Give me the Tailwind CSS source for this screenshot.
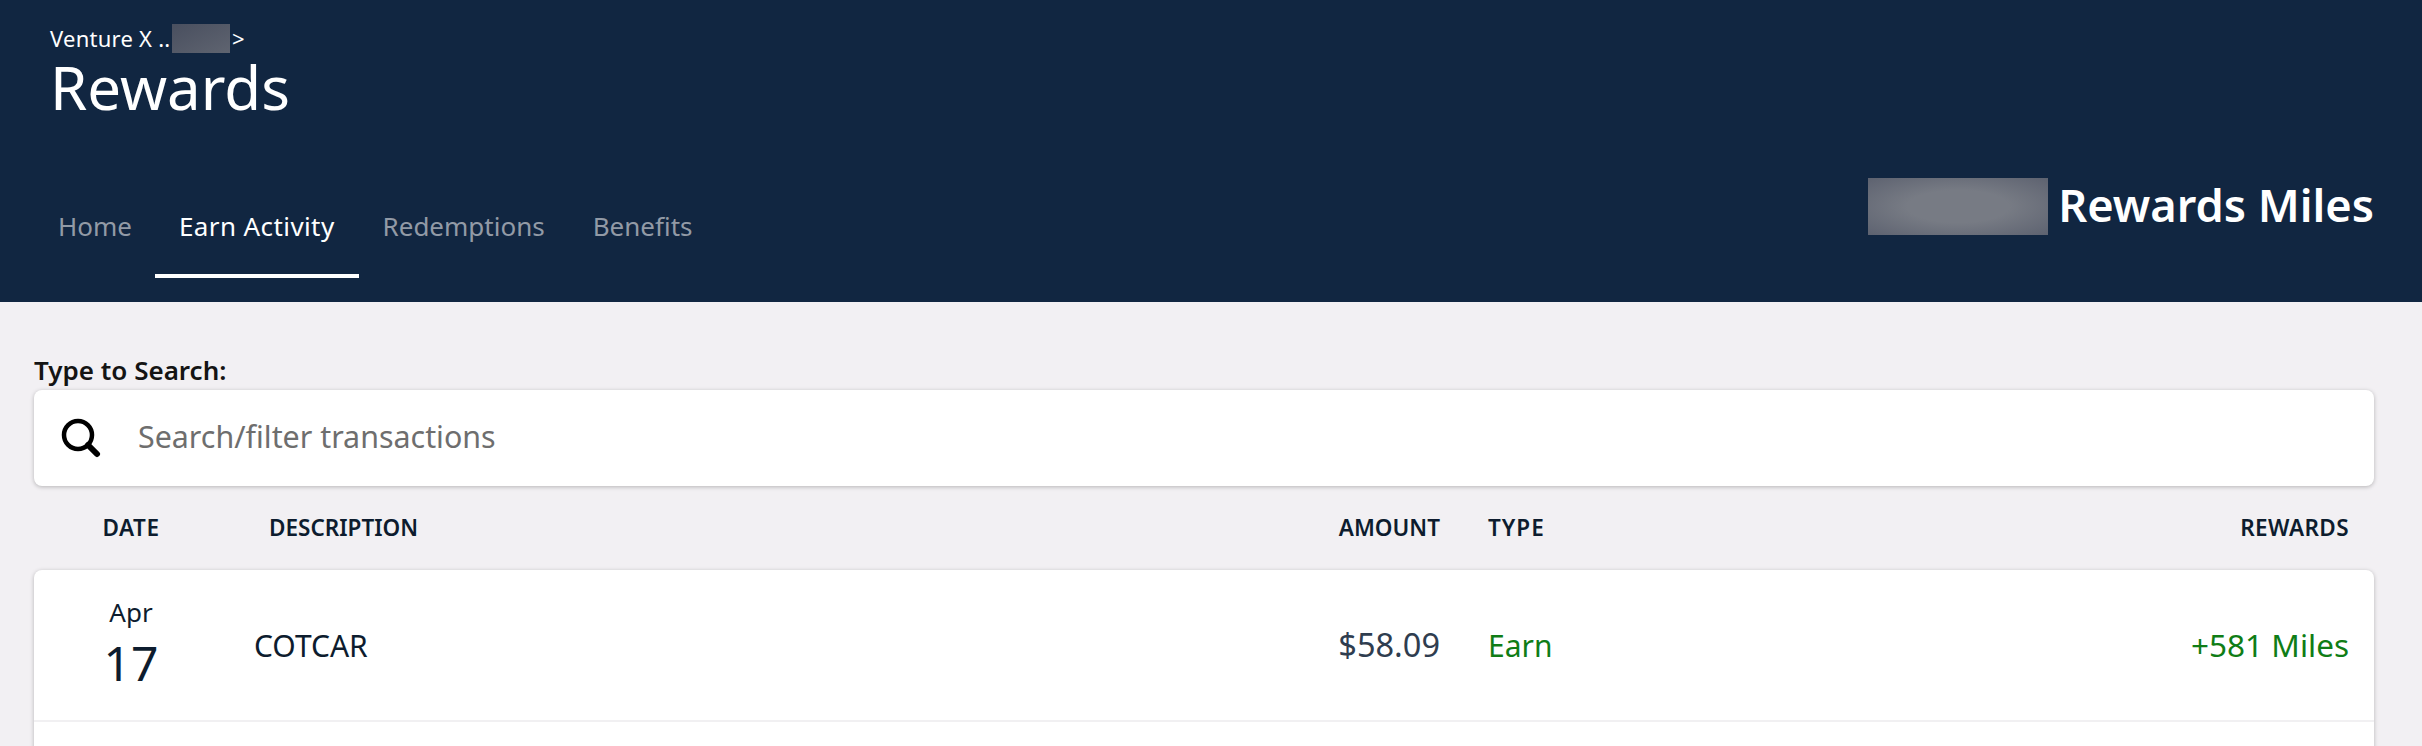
<!DOCTYPE html>
<html lang="en">
<head>
    <meta charset="UTF-8">
    <title>Rewards</title>
    <script src="https://cdn.jsdelivr.net/npm/@tailwindcss/browser@4"></script>
</head>
<body class="bg-[#f2f0f3] h-screen overflow-hidden font-['Noto_Sans',sans-serif] text-[#0d1c2e]">

    <!-- Header -->
    <header class="h-[302px] bg-[#112641] flex justify-between text-white">
        <div class="flex flex-col pl-[34px]">
            <div class="flex items-center h-[29px] mt-[24px] pl-[16px] text-[22px] leading-none">
                <span class="w-[122px] pb-[2px] whitespace-nowrap tracking-[0.25px]">Venture X ..</span>
                <span class="w-[58px] h-[29px] bg-gradient-to-br from-[#494f5f] to-[#5f6470]"></span>
                <span class="ml-[2px] pb-[2px]">&gt;</span>
            </div>
            <h1 class="pl-[16px] mt-[1px] text-[60px] leading-[66px]">Rewards</h1>
            <nav class="flex mt-[66px] text-[26px] leading-[36px]">
                <a class="pl-[24px] pr-[23px] pt-[22px] h-[92px] text-[#929aa6]">Home</a>
                <a class="px-[24px] pt-[22px] h-[92px] tracking-[0.4px] border-b-4 border-white">Earn Activity</a>
                <a class="px-[24px] pt-[22px] h-[92px] text-[#929aa6]">Redemptions</a>
                <a class="px-[24px] pt-[22px] h-[92px] text-[#929aa6]">Benefits</a>
            </nav>
        </div>
        <div class="flex items-start pt-[178px] pr-[48px]">
            <span class="w-[180px] h-[57px] bg-[radial-gradient(ellipse_at_center,#777b84_40%,#5d6270_100%)]"></span>
            <span class="ml-[10px] text-[45.2px] font-semibold leading-[53px] whitespace-nowrap">Rewards Miles</span>
        </div>
    </header>

    <!-- Content -->
    <main class="pl-[34px] pr-[48px]">
        <label class="block mt-[51px] text-[26px] font-semibold leading-[34px] text-[#141414]">Type to Search:</label>
        <div class="flex items-center h-[96px] mt-[3px] bg-white rounded-lg shadow-[0_1px_4px_rgba(0,0,0,0.25)]">
            <svg class="ml-[27px] w-[40px] h-[40px]" viewBox="0 0 40 40" fill="none" stroke="#000" stroke-linecap="round">
                <circle cx="17" cy="17" r="14" stroke-width="4.5"/>
                <path d="M27 27 L36 36" stroke-width="6"/>
            </svg>
            <span class="ml-[37px] text-[30.4px] leading-[40px] pb-[2px] text-[#6e6e6e]">Search/filter transactions</span>
        </div>

        <div class="flex items-center h-[84px] pr-[25px] text-[22.5px] font-semibold">
            <div class="w-[194px] text-center tracking-[0.5px]">DATE</div>
            <div class="w-[1072px] pl-[41px]">DESCRIPTION</div>
            <div class="w-[140px] text-right">AMOUNT</div>
            <div class="flex-1 pl-[48px] tracking-[1px]">TYPE</div>
            <div class="text-right tracking-[0.4px]">REWARDS</div>
        </div>

        <div class="bg-white rounded-lg shadow-[0_1px_4px_rgba(0,0,0,0.25)] h-[300px]">
            <div class="flex items-center h-[152px] pr-[25px] border-b-2 border-[#f1f0f2]">
                <div class="w-[194px] text-center">
                    <div class="text-[26px] leading-[32px]">Apr</div>
                    <div class="mt-[4px] text-[48px] leading-[62px]">17</div>
                </div>
                <div class="w-[1072px] pl-[26px] text-[30px]">COTCAR</div>
                <div class="w-[140px] text-right text-[32.5px] text-[#2f3d4f]">$58.09</div>
                <div class="flex-1 pl-[48px] text-[30px] text-[#0f7d16]">Earn</div>
                <div class="text-right text-[31.5px] text-[#0f7d16]">+581 Miles</div>
            </div>
        </div>
    </main>
</body>
</html>
